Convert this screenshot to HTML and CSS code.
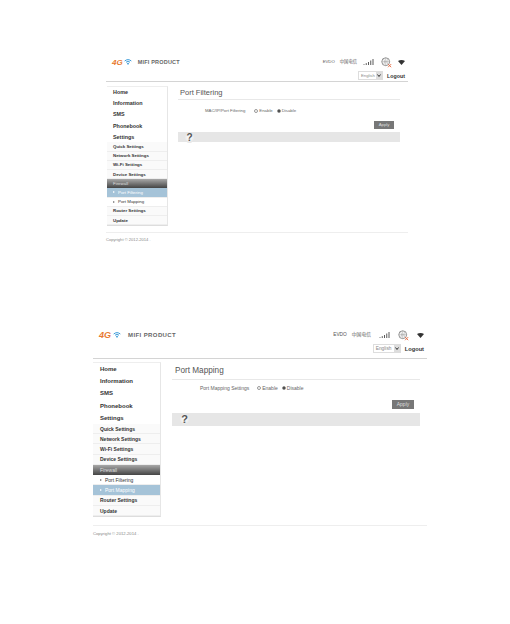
FILE: index.html
```html
<!DOCTYPE html>
<html lang="en">
<head>
    <meta charset="UTF-8">
    <meta name="viewport" content="width=device-width, initial-scale=1.0">
    <title>MIFI Product</title>
    <link rel="stylesheet" href="styles.css">
</head>
<body>
    <!-- Port Filtering Section -->
    <div class="panel panel-small">
        <div class="header">
            <div class="brand">
                <span class="four-g">4G</span>
                <svg class="wifi" viewBox="0 0 12 10"><path d="M1 3.5C4 .8 8 .8 11 3.5M3 5.5C4.8 3.9 7.2 3.9 9 5.5" fill="none" stroke="#3a9ad9" stroke-width="1.5"/><path d="M6 9.5 4.4 7.2C5.4 6.5 6.6 6.5 7.6 7.2Z" fill="#3a9ad9"/></svg>
                <span class="brand-name">MIFI PRODUCT</span>
            </div>
            <div class="status">
                <div class="status-row">
                    <span class="net">EVDO</span>
                    <span class="net">中国电信</span>
                    <svg class="signal" viewBox="0 0 14 8"><path d="M1 7v1M4 5.5v2.5M7 4v4M10 2v6M13 0v8" stroke="#555" stroke-width="1.3"/></svg>
                    <svg class="globe" viewBox="0 0 14 14"><circle cx="6" cy="6" r="5" fill="none" stroke="#777" stroke-width="1"/><path d="M1 6h10M6 1v10M3 2.5c2 2 2 5 0 7M9 2.5c-2 2-2 5 0 7" fill="none" stroke="#999" stroke-width=".7"/><path d="M9 9l4 4M13 9l-4 4" stroke="#e8704a" stroke-width="1.2"/></svg>
                    <svg class="wifi-status" viewBox="0 0 10 7"><path d="M0 1.5C3-.5 7-.5 10 1.5L5 7Z" fill="#333"/></svg>
                </div>
                <div class="status-row lang-row">
                    <span class="lang">English<svg class="lang-arrow" viewBox="0 0 6 7"><path d="M1.5 2.5 3 4.5 4.5 2.5" fill="none" stroke="#333" stroke-width="1"/></svg></span>
                    <span class="logout">Logout</span>
                </div>
            </div>
        </div>
        <div class="main">
            <div class="menu">
                <div class="menu-top">Home</div>
                <div class="menu-top">Information</div>
                <div class="menu-top">SMS</div>
                <div class="menu-top">Phonebook</div>
                <div class="menu-top">Settings</div>
                <div class="menu-sub">Quick Settings</div>
                <div class="menu-sub">Network Settings</div>
                <div class="menu-sub">Wi-Fi Settings</div>
                <div class="menu-sub">Device Settings</div>
                <div class="menu-sub firewall">Firewall</div>
                <div class="menu-sub leaf active">Port Filtering</div>
                <div class="menu-sub leaf">Port Mapping</div>
                <div class="menu-sub">Router Settings</div>
                <div class="menu-sub">Update</div>
            </div>
            <div class="content">
                <h2>Port Filtering</h2>
                <div class="setting">
                    <span class="setting-label">MAC/IP/Port Filtering</span>
                    <span class="radio"></span><span>Enable</span>
                    <span class="radio checked"></span><span>Disable</span>
                </div>
                <div class="actions"><span class="apply">Apply</span></div>
                <div class="help"><span class="help-mark">?</span></div>
            </div>
        </div>
        <div class="footer">Copyright © 2012-2014 .</div>
    </div>

    <!-- Port Mapping Section -->
    <div class="panel panel-large">
        <div class="header">
            <div class="brand">
                <span class="four-g">4G</span>
                <svg class="wifi" viewBox="0 0 12 10"><path d="M1 3.5C4 .8 8 .8 11 3.5M3 5.5C4.8 3.9 7.2 3.9 9 5.5" fill="none" stroke="#3a9ad9" stroke-width="1.5"/><path d="M6 9.5 4.4 7.2C5.4 6.5 6.6 6.5 7.6 7.2Z" fill="#3a9ad9"/></svg>
                <span class="brand-name">MIFI PRODUCT</span>
            </div>
            <div class="status">
                <div class="status-row">
                    <span class="net">EVDO</span>
                    <span class="net">中国电信</span>
                    <svg class="signal" viewBox="0 0 14 8"><path d="M1 7v1M4 5.5v2.5M7 4v4M10 2v6M13 0v8" stroke="#555" stroke-width="1.3"/></svg>
                    <svg class="globe" viewBox="0 0 14 14"><circle cx="6" cy="6" r="5" fill="none" stroke="#777" stroke-width="1"/><path d="M1 6h10M6 1v10M3 2.5c2 2 2 5 0 7M9 2.5c-2 2-2 5 0 7" fill="none" stroke="#999" stroke-width=".7"/><path d="M9 9l4 4M13 9l-4 4" stroke="#e8704a" stroke-width="1.2"/></svg>
                    <svg class="wifi-status" viewBox="0 0 10 7"><path d="M0 1.5C3-.5 7-.5 10 1.5L5 7Z" fill="#333"/></svg>
                </div>
                <div class="status-row lang-row">
                    <span class="lang">English<svg class="lang-arrow" viewBox="0 0 6 7"><path d="M1.5 2.5 3 4.5 4.5 2.5" fill="none" stroke="#333" stroke-width="1"/></svg></span>
                    <span class="logout">Logout</span>
                </div>
            </div>
        </div>
        <div class="main">
            <div class="menu">
                <div class="menu-top">Home</div>
                <div class="menu-top">Information</div>
                <div class="menu-top">SMS</div>
                <div class="menu-top">Phonebook</div>
                <div class="menu-top">Settings</div>
                <div class="menu-sub">Quick Settings</div>
                <div class="menu-sub">Network Settings</div>
                <div class="menu-sub">Wi-Fi Settings</div>
                <div class="menu-sub">Device Settings</div>
                <div class="menu-sub firewall">Firewall</div>
                <div class="menu-sub leaf">Port Filtering</div>
                <div class="menu-sub leaf active">Port Mapping</div>
                <div class="menu-sub">Router Settings</div>
                <div class="menu-sub">Update</div>
            </div>
            <div class="content">
                <h2>Port Mapping</h2>
                <div class="setting">
                    <span class="setting-label">Port Mapping Settings</span>
                    <span class="radio"></span><span>Enable</span>
                    <span class="radio checked"></span><span>Disable</span>
                </div>
                <div class="actions"><span class="apply">Apply</span></div>
                <div class="help"><span class="help-mark">?</span></div>
            </div>
        </div>
        <div class="footer">Copyright © 2012-2014 .</div>
    </div>
</body>
</html>
```

FILE: styles.css
```css
body {
    margin: 0;
    background-color: #fff;
    font-family: "Liberation Sans", Arial, "Noto Sans CJK SC", sans-serif;
    color: #333;
}
.panel-small {
    --top: 11.2px;
    --sub: 9.2px;
    --top-font: 5.4px;
    --sub-font: 4.4px;
    --small-font: 4.3px;
    margin: 55px 0 0 106px;
    width: 302px;
    height: 190px;
}
.panel-large {
    --top: 12.2px;
    --sub: 10.25px;
    --top-font: 6px;
    --sub-font: 5px;
    --small-font: 5px;
    margin: 84px 0 0 93px;
    width: 334px;
    height: 210px;
}
.header {
    display: flex;
    justify-content: space-between;
    border-bottom: 1px solid #d4d4d4;
    padding-bottom: 2px;
}
.panel-small .header { height: 24px; }
.panel-large .header { height: 27px; }
.brand {
    display: flex;
    align-items: center;
    height: 12px;
    padding-left: 6px;
}
.panel-small .brand { margin-top: 1px; }
.four-g {
    color: #e8792f;
    font-weight: bold;
    font-style: italic;
    font-size: 8px;
}
.panel-large .four-g { font-size: 9px; }
.wifi {
    width: 8px;
    height: 8px;
    margin-left: 1px;
}
.panel-large .wifi { margin-left: 2px; }
.brand-name {
    margin-left: 6px;
    font-size: 5.5px;
    font-weight: bold;
    color: #666;
    letter-spacing: 0.2px;
}
.panel-large .brand-name {
    margin-left: 7px;
    font-size: 6px;
    letter-spacing: 0.4px;
}
.status {
    padding-right: 3px;
}
.panel-small .status { padding-top: 1px; }
.status-row {
    display: flex;
    align-items: center;
    justify-content: flex-end;
    height: 12px;
    gap: 5px;
}
.net {
    font-size: 4.3px;
    line-height: 6px;
    height: 6px;
    color: #555;
}
.panel-large .net { font-size: 4.8px; }
.signal {
    width: 11px;
    height: 6px;
    margin-left: 1px;
}
.globe {
    width: 11px;
    height: 11px;
    margin-left: 2px;
}
.wifi-status {
    width: 7px;
    height: 5px;
    margin-left: 1px;
}
.panel-large .signal, .panel-large .globe, .panel-large .wifi-status { margin-left: 3px; }
.lang-row {
    height: 11px;
    gap: 4px;
    margin-top: 2px;
}
.lang {
    display: flex;
    align-items: center;
    justify-content: space-between;
    box-sizing: border-box;
    width: 25px;
    height: 9px;
    padding-left: 2px;
    border: 1px solid #ddd;
    font-size: 4.2px;
    color: #888;
}
.panel-large .lang { width: 28px; font-size: 4.8px; gap: 1px; }
.lang-arrow {
    width: 6px;
    height: 7px;
    background-color: #ddd;
}
.logout {
    font-size: 5.3px;
    font-weight: bold;
    color: #333;
}
.panel-large .logout { font-size: 5.7px; }
.main {
    display: flex;
}
.panel-small .main { margin-top: 3.5px; }
.panel-large .main { margin-top: 3px; }
.menu {
    flex: none;
    border-top: 1px solid #eee;
    border-right: 1px solid #e6e6e6;
    border-bottom: 1px solid #ddd;
}
.panel-small .menu { width: 60px; margin-left: 1px; }
.panel-large .menu { width: 67px; }
.menu-top, .menu-sub {
    display: flex;
    align-items: center;
    padding-left: 6px;
    font-weight: bold;
    color: #333;
}
.panel-large .menu-top, .panel-large .menu-sub { padding-left: 7px; }
.menu-top {
    height: var(--top);
    font-size: var(--top-font);
}
.menu-sub {
    height: var(--sub);
    font-size: var(--sub-font);
    background-color: #fafafa;
    border-bottom: 1px solid #eee;
    box-sizing: border-box;
}
.menu-sub.firewall {
    background: linear-gradient(#a8a8a8, #444);
    color: #ddd;
    font-weight: normal;
    border-bottom: 0;
}
.menu-sub.leaf {
    font-weight: normal;
    background-color: #fff;
}
.leaf::before {
    content: "";
    margin-right: 3px;
    border-left: 2px solid #777;
    border-top: 1.5px solid transparent;
    border-bottom: 1.5px solid transparent;
}
.menu-sub.active {
    background-color: #a5c3d8;
    color: #fff;
}
.active::before {
    border-left-color: #fff;
}
.content {
    flex: 1;
}
.panel-small .content { margin: 0 8px 0 10px; padding-top: 2.5px; }
.panel-large .content { margin: 0 7px 0 11px; padding-top: 3px; }
h2 {
    margin: 0;
    font-weight: normal;
    color: #555;
    border-bottom: 1px solid #e8e8e8;
}
.panel-small h2 { font-size: 7.5px; height: 11px; line-height: 9px; padding-left: 2px; }
.panel-large h2 { font-size: 8.2px; height: 14px; line-height: 12px; padding-left: 3px; }
.setting {
    display: flex;
    align-items: center;
    font-size: var(--small-font);
    color: #666;
}
.panel-small .setting { margin-top: 8px; }
.panel-large .setting { margin-top: 5px; }
.setting-label {
    margin-right: 6px;
}
.panel-small .setting-label { margin-left: 27px; }
.panel-large .setting-label { margin-left: 28px; margin-right: 5px; }
.radio {
    box-sizing: border-box;
    width: 4px;
    height: 4px;
    margin: 0 1px 0 3px;
    border: 1px solid #999;
    border-radius: 50%;
}
.checked {
    background-color: #333;
    margin-left: 4px;
}
.actions {
    display: flex;
    justify-content: flex-end;
    margin-top: 7.5px;
    padding-right: 6px;
}
.apply {
    background-color: #777;
    color: #ddd;
    font-size: var(--small-font);
    text-align: center;
}
.panel-small .apply { width: 20px; height: 8px; line-height: 8px; }
.panel-large .apply { width: 22px; height: 9px; line-height: 9px; }
.panel-large .actions { margin-top: 9px; }
.help {
    display: flex;
    align-items: center;
    margin-top: 3.5px;
    background-color: #e6e6e6;
    font-weight: bold;
    color: #555;
}
.panel-small .help { height: 10px; font-size: 10px; padding-left: 7px; }
.panel-large .help { height: 13px; font-size: 11px; padding-left: 8px; }
.help-mark {
    width: 9px;
    text-align: center;
    border-radius: 50%;
    background: radial-gradient(circle, #fff, #e6e6e6 70%);
}
.footer {
    border-top: 1px solid #eee;
    font-size: 4.1px;
    color: #888;
    padding-top: 4px;
}
.panel-small .footer { margin-top: 6px; }
.panel-large .footer { margin-top: 8px; font-size: 4.2px; padding-top: 5px; }
```
